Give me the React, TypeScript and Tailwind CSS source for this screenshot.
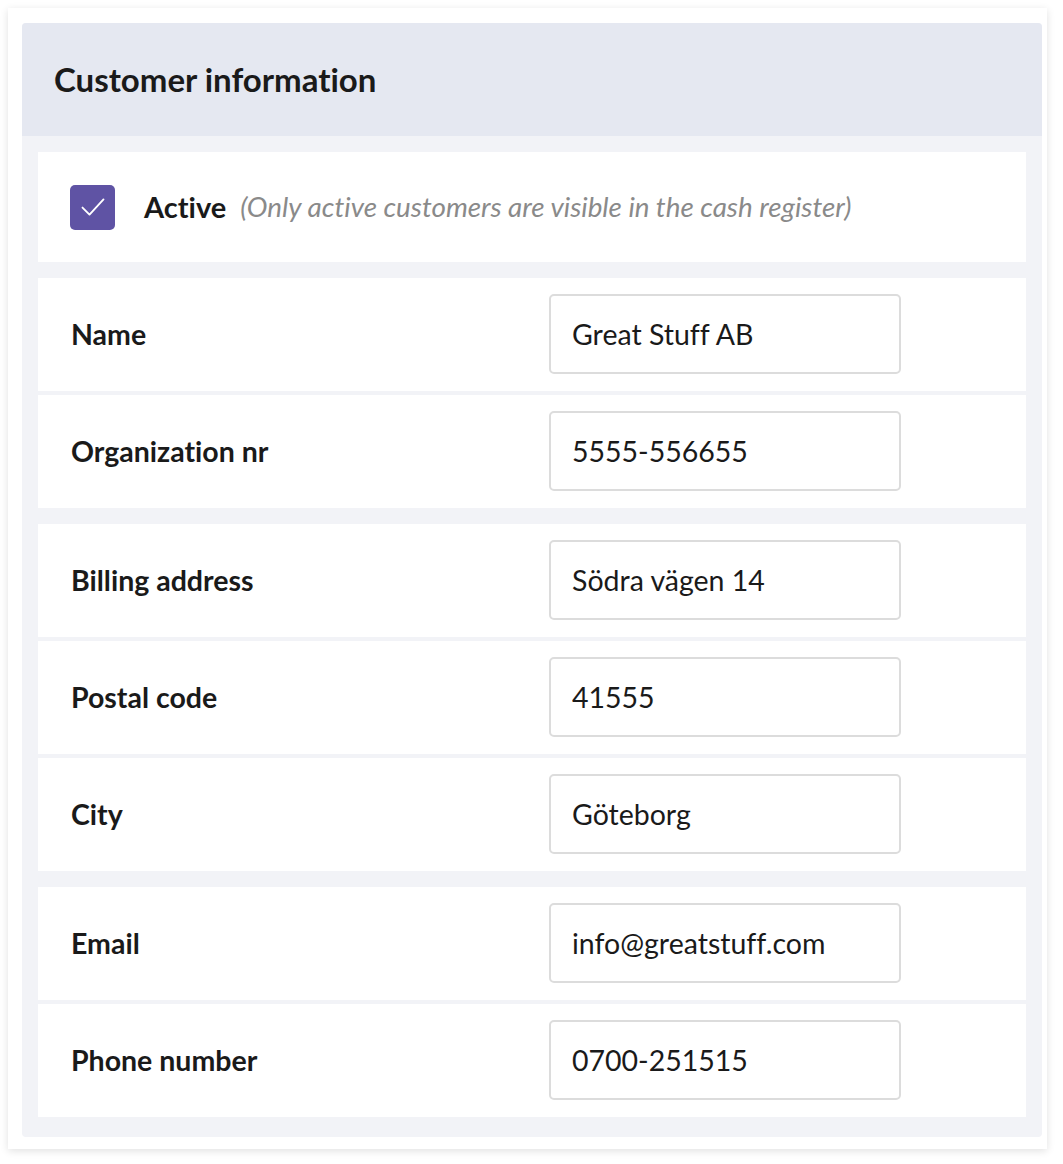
import React from 'react'

type Field = { label: string; value: string }

const groups: Field[][] = [
  [
    { label: 'Name', value: 'Great Stuff AB' },
    { label: 'Organization nr', value: '5555-556655' },
  ],
  [
    { label: 'Billing address', value: 'Södra vägen 14' },
    { label: 'Postal code', value: '41555' },
    { label: 'City', value: 'Göteborg' },
  ],
  [
    { label: 'Email', value: 'info@greatstuff.com' },
    { label: 'Phone number', value: '0700-251515' },
  ],
]

// Lato, without its "ti" ligature
const font = "[font-family:Lato,'Noto_Sans',sans-serif] [font-feature-settings:'liga'_0,'clig'_0,'calt'_0,'dlig'_0]"

function Row({ label, value }: Field) {
  return (
    <div className="flex items-center h-[113px] bg-white pl-[33px]">
      <div className="w-[478px] text-[28.5px] font-bold text-[#1a1a1a]">{label}</div>
      <input
        readOnly
        value={value}
        className={`w-[352px] h-[80px] -mt-[2px] px-[21px] border-2 border-[#dcdcdc] rounded-[5px] text-[28.5px] text-[#1a1a1a] bg-white outline-none ${font}`}
      />
    </div>
  )
}

export default function App() {
  return (
    <div className={`min-h-screen bg-white p-2 ${font}`}>
      <div className="w-[1039px] bg-white pl-[14px] pr-[5px] pt-[15px] pb-[12px] shadow-[0_2px_8px_rgba(0,0,0,0.12)]">
        <div className="bg-[#f2f3f7] rounded-[4px] overflow-hidden">
          <div className="h-[113px] bg-[#e5e8f1] flex items-center pl-[32px]">
            <h1 className="text-[33px] font-bold text-[#1a1a1a]">Customer information</h1>
          </div>
          <div className="px-4 pt-4 pb-5 flex flex-col gap-4">
            <div className="h-[110px] bg-white flex items-center pl-[32px]">
              <div className="w-[45px] h-[45px] rounded-[5px] bg-[#5f53a4] flex items-center justify-center">
                <svg width="28" height="28" viewBox="0 0 24 24" fill="none" stroke="white" strokeWidth="1.6" strokeLinecap="round" strokeLinejoin="round">
                  <path d="M3 12.5l6 6L21 5.5" />
                </svg>
              </div>
              <span className="ml-[29px] text-[29px] font-bold text-[#1a1a1a]">Active</span>
              <span className="ml-[14px] text-[27.8px] italic text-[#8a8a8a]">(Only active customers are visible in the cash register)</span>
            </div>
            {groups.map((g, i) => (
              <div key={i} className="flex flex-col gap-1">
                {g.map(f => (
                  <Row key={f.label} {...f} />
                ))}
              </div>
            ))}
          </div>
        </div>
      </div>
    </div>
  )
}
